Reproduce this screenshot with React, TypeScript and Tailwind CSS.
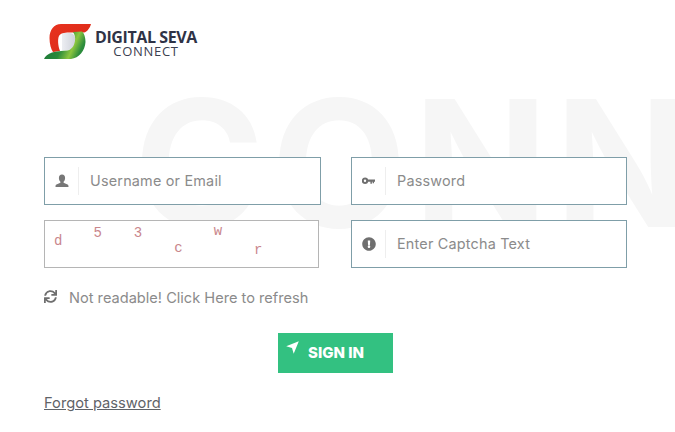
import { FaExclamationCircle, FaSync } from "react-icons/fa";

const font = { fontFamily: '"Inter", "Noto Sans", sans-serif' };

function UserIcon() {
  return (
    <svg width="14" height="14" viewBox="0 0 14 14" fill="#777">
      <path d="M7 0.500C4.900 0.500 3.900 2 3.900 3.900c0 1.500.6 3 1.500 3.800v1L1.500 10.500C.7 10.900.5 11.600.5 13h13c0-1.400-.2-2.100-1-2.500L8.600 8.700v-1c.9-.8 1.500-2.300 1.500-3.800C10.100 2 9.100.5 7 .5z" />
    </svg>
  );
}

function KeyIcon() {
  return (
    <svg width="13" height="8" viewBox="0 0 13 8" fill="none">
      <circle cx="3" cy="3.800" r="2.200" stroke="#6f6f6f" strokeWidth="2" />
      <path d="M5.500 2.500H13V4.800H12V6.300H10.600V4.800H9.900V6.800H8.400V4.800H5.500z" fill="#6f6f6f" />
    </svg>
  );
}

function SendIcon() {
  return (
    <svg width="13" height="13" viewBox="0 0 13 13" fill="#fff">
      <path d="M12.800 0.200L0.200 5.300L6 6.900L7.700 12.800z" />
    </svg>
  );
}

function Logo() {
  return (
    <svg width="48" height="36" viewBox="0 0 48 36">
      <defs>
        <linearGradient id="red" x1="0" y1="0" x2="1" y2="1">
          <stop offset="0" stopColor="#e8321f" />
          <stop offset="1" stopColor="#d92a17" />
        </linearGradient>
        <linearGradient id="green" x1="0" y1="0" x2="1" y2="0.300">
          <stop offset="0" stopColor="#17703a" />
          <stop offset="0.550" stopColor="#2a8a3a" />
          <stop offset="0.800" stopColor="#8cc63f" />
          <stop offset="1" stopColor="#2c8c3c" />
        </linearGradient>
        <linearGradient id="dee" x1="0" y1="0" x2="1" y2="0">
          <stop offset="0" stopColor="#eceef2" />
          <stop offset="1" stopColor="#cdd0d9" />
        </linearGradient>
      </defs>
      <path d="M18 9H26C30 9 32 14 32 17C32 21 29 26 24 26H18z" fill="url(#dee)" />
      <path d="M47 0H17C10 0 5.500 6 5.500 14C5.500 20 7 25 9 28L16 27C14 22 13.500 15 15 12C16 9.500 20 8.500 25 8.500H40C43 8 46 4 47 0z" fill="url(#red)" />
      <path d="M0 35H27C35 34 41 27 41.500 18C41.500 13 40 9 38 7.500L29 8C31 11 31.500 14 31 17C30 23 27 26 23 26.500C18 27 12 27 8 28.500C4 30 1 32 0 35z" fill="url(#green)" />
    </svg>
  );
}

function Field({ icon, placeholder }: { icon: React.ReactNode; placeholder: string }) {
  return (
    <div className="flex h-12 items-center border border-[#7f9ea8] bg-white">
      <div className="flex w-[33px] shrink-0 items-center justify-center">{icon}</div>
      <div className="h-7 w-px bg-[#eeeeee]" />
      <span className="ml-[11px] text-[14.400px] tracking-[0.2px] text-[#8b8b8b]">{placeholder}</span>
    </div>
  );
}

function Captcha() {
  const chars = [
    ["d", "ml-[9px] mt-[11px]"],
    ["5", "ml-[31px] mt-[3px]"],
    ["3", "ml-[32px] mt-[3px]"],
    ["c", "ml-[32px] mt-[18px]"],
    ["w", "ml-[31px] mt-[1px]"],
    ["r", "ml-[32px] mt-[20px]"],
  ];
  return (
    <div className="flex h-12 w-[275px] items-start border border-[#b5b5b5] bg-white" style={{ fontFamily: '"Liberation Mono", monospace' }}>
      {chars.map(([c, cls]) => (
        <span key={c} className={`text-[14px] leading-[18px] text-[#c9868c] ${cls}`}>{c}</span>
      ))}
    </div>
  );
}

export default function App() {
  return (
    <div className="relative h-[432px] w-[675px] overflow-hidden bg-white pl-[44px]" style={font}>
      <div className="pointer-events-none absolute left-[134px] top-[63px] whitespace-nowrap text-[176px] font-bold leading-[200px] tracking-[7px] text-[#f6f6f6]">
        CONNECT
      </div>

      <div className="relative flex h-[157px] items-start pt-[24px]">
        <Logo />
        <div className="ml-[3px] mt-[5px] flex flex-col items-center" style={{ fontFamily: '"Open Sans", sans-serif' }}>
          <span className="text-[16px] font-bold leading-[16px] tracking-[-0.4px] text-[#2f3346]">DIGITAL SEVA</span>
          <span className="text-[13px] font-normal leading-[13px] tracking-[0.7px] text-[#3c4050]">CONNECT</span>
        </div>
      </div>

      <div className="relative grid w-[583px] grid-cols-[277px_276px] gap-x-[30px] gap-y-[15px]">
        <Field icon={<UserIcon />} placeholder="Username or Email" />
        <Field icon={<KeyIcon />} placeholder="Password" />
        <Captcha />
        <Field icon={<FaExclamationCircle className="text-[14px] text-[#6f6f6f]" />} placeholder="Enter Captcha Text" />
      </div>

      <div className="relative mt-[21px] flex h-5 items-center text-[14.600px] text-[#8b8b8b]">
        <FaSync className="mb-[6px] text-[13px] text-[#6f6f6f]" />
        <span className="ml-[12px]">Not readable! Click Here to refresh</span>
      </div>

      <div className="relative ml-[234px] mt-[24px] flex h-10 w-[115px] items-start bg-[#33c181] pl-2 pt-2">
        <SendIcon />
        <span className="ml-[9px] mt-[1px] text-[15px] font-extrabold text-white">SIGN IN</span>
      </div>

      <div className="relative mt-[20px] text-[14.700px] leading-5 text-[#5f6368] underline">Forgot password</div>
    </div>
  );
}
